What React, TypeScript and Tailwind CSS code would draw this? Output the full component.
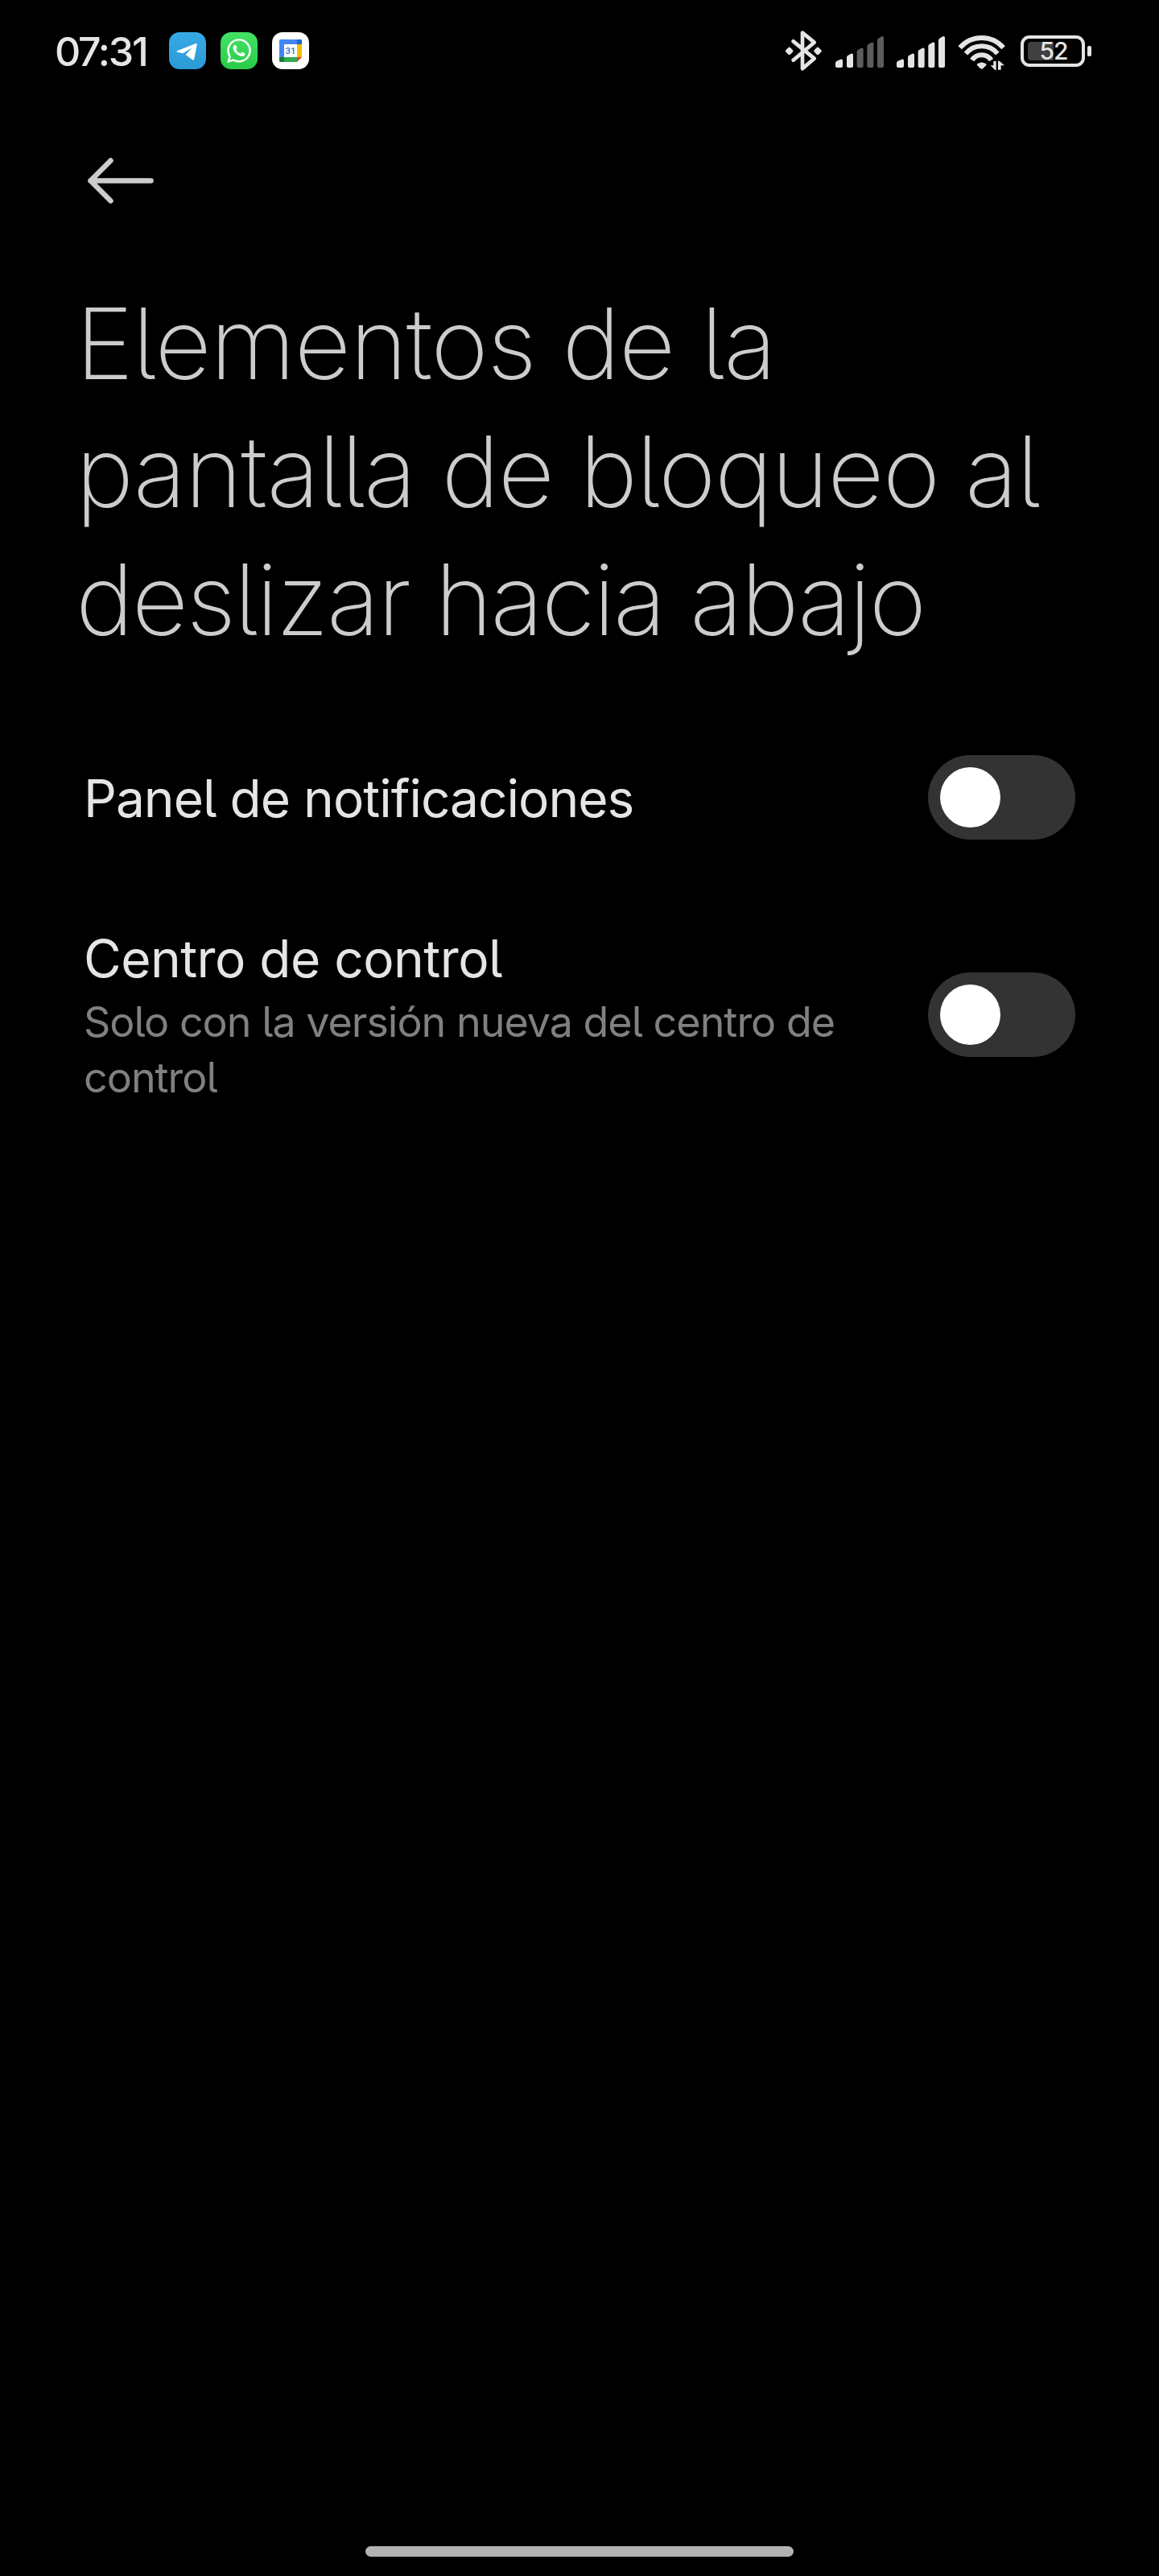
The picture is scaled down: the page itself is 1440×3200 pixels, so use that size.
import { useState } from "react";
import { FaWhatsapp } from "react-icons/fa";

type ToggleProps = {
  label: string;
  checked: boolean;
  onChange: (checked: boolean) => void;
};

function Toggle({ label, checked, onChange }: ToggleProps) {
  return (
    <button
      type="button"
      role="switch"
      aria-checked={checked}
      aria-label={label}
      onClick={() => onChange(!checked)}
      className={`flex h-[105px] w-[183px] shrink-0 items-center rounded-full bg-[#333333] px-[15px] ${
        checked ? "justify-end" : "justify-start"
      }`}
    >
      <span className="size-[75px] rounded-full bg-white" />
    </button>
  );
}

function TelegramIcon() {
  return (
    <span className="flex size-[46px] items-center justify-center rounded-[13px] bg-linear-to-b from-[#37aae6] to-[#2b9ad6]">
      <svg viewBox="480 60 138 138" className="size-full" fill="#ffffff">
        <path d="M510 130 L580 102 Q585 101 584 107 L574 160 Q572 166 566 162 L542 144 L566 118 L532 139 L511 134 Q506 132 510 130 Z" />
      </svg>
    </span>
  );
}

function WhatsappIcon() {
  return (
    <span className="flex size-[46px] items-center justify-center rounded-[13px] bg-linear-to-b from-[#43e463] to-[#2bc948]">
      <FaWhatsapp className="size-[34px] text-white" />
    </span>
  );
}

function CalendarIcon() {
  return (
    <span className="size-[46px] rounded-[13px] bg-white">
      <svg viewBox="864 60 138 138" className="size-full">
        <path d="M895 87 H957 V105 H909 V153 H891 V91 Q891 87 895 87 Z" fill="#4285f4" />
        <path d="M957 87 H971 Q975 87 975 91 V105 H957 Z" fill="#1967d2" />
        <path d="M957 105 H975 V153 H957 Z" fill="#fbbc04" />
        <path d="M909 153 H957 V171 H909 Z" fill="#34a853" />
        <path d="M891 153 H909 V171 H895 Q891 171 891 167 Z" fill="#188038" />
        <path d="M957 153 H975 L957 171 Z" fill="#ea4335" />
        <text x="933" y="141" textAnchor="middle" fontSize="34" fontWeight="500" fill="#2f6fdc" className="font-['Roboto',sans-serif]">
          31
        </text>
      </svg>
    </span>
  );
}

function BluetoothIcon() {
  return (
    <svg viewBox="48 55 135 150" className="h-[50px] w-[45px]" fill="none" stroke="#e5e5e5" strokeLinejoin="round" strokeLinecap="round">
      <path d="M77 165 L155 99 L111 63 V197 L155 159 L77 95" strokeWidth="14" />
      <path d="M62 123 L70 131 L62 139 L54 131 Z" fill="#e5e5e5" strokeWidth="12" />
      <path d="M168 123 L176 131 L168 139 L160 131 Z" fill="#e5e5e5" strokeWidth="12" />
    </svg>
  );
}

const BARS = [
  { x: 0, w: 27, top: 85 },
  { x: 42, w: 24, top: 64 },
  { x: 80, w: 24, top: 43 },
  { x: 118, w: 24, top: 22 },
  { x: 156, w: 24, top: 0 },
];

function SignalIcon({ level }: { level: number }) {
  return (
    <svg viewBox="0 0 180 117" className="h-[39px] w-[60px]">
      {BARS.map(({ x, w, top }, i) => (
        <path
          key={x}
          d={`M${x} ${top + 15} Q${x} ${top + 11} ${x + 4} ${top + 8} L${x + w - 8} ${top + 1} Q${x + w} ${top - 2} ${x + w} ${top + 6} V111 Q${x + w} 117 ${x + w - 6} 117 H${x + 6} Q${x} 117 ${x} 111 Z`}
          fill={i < level ? "#e5e5e5" : "#5c5c5c"}
        />
      ))}
    </svg>
  );
}

function WifiIcon() {
  return (
    <svg viewBox="61 66 177 132" className="h-[44px] w-[59px]" fill="none" stroke="#e5e5e5" strokeWidth="18">
      <path d="M69 115 A107 107 0 0 1 231 115" />
      <path d="M91 137 A76 76 0 0 1 209 137" />
      <path d="M114 161 A43 43 0 0 1 186 161" />
      <path d="M133 180 Q131 176 135 174 Q150 165 165 174 Q169 176 167 180 L155 192 Q150 196 145 192 Z" fill="#e5e5e5" stroke="none" />
      {/* data up/down arrows */}
      <path d="M194 165 H204 V198 H200 L183 181 H194 Z" fill="#e5e5e5" stroke="none" />
      <path d="M211 164 H216 L235 181 H222 V197 H211 Z" fill="#e5e5e5" stroke="none" />
    </svg>
  );
}

function BatteryIcon({ percent }: { percent: number }) {
  return (
    <div className="flex items-center gap-[3px]">
      <div className="relative flex h-[39px] w-[80px] items-center rounded-[11px] border-4 border-[#e5e5e5] px-[5px]">
        <div className="h-[23px] rounded-l-[4px] bg-[#404040]" style={{ width: `${percent}%` }} />
        <span className="absolute inset-0 flex items-center justify-center pl-[2px] text-[30px] leading-none font-medium tracking-[-1px] text-[#e5e5e5]">
          {percent}
        </span>
      </div>
      <div className="h-[13px] w-[5px] rounded-[2px] bg-[#e5e5e5]" />
    </div>
  );
}

function StatusBar() {
  return (
    <div className="flex h-[126px] items-center justify-between pr-[84px] pl-[68px]">
      <div className="flex items-center">
        <span className="w-[142px] pt-px text-[50px] leading-none font-medium tracking-[-2.2px] text-[#e5e5e5]">07:31</span>
        <div className="flex gap-[18px]">
          <TelegramIcon />
          <WhatsappIcon />
          <CalendarIcon />
        </div>
      </div>
      <div className="flex items-center">
        <BluetoothIcon />
        <div className="ml-[17px] flex gap-4 pt-[3px]">
          <SignalIcon level={2} />
          <SignalIcon level={5} />
        </div>
        <div className="mr-[19px] ml-4 pt-[3px]">
          <WifiIcon />
        </div>
        <BatteryIcon percent={52} />
      </div>
    </div>
  );
}

export default function App() {
  const [notifications, setNotifications] = useState(false);
  const [controlCenter, setControlCenter] = useState(false);

  return (
    <div className="flex h-[3200px] w-[1440px] flex-col bg-black font-['Inter','Noto_Sans',sans-serif] [font-feature-settings:'cv05']">
      <StatusBar />

      <header className="px-[94px] pt-[70px]">
        <button type="button" aria-label="Atrás" className="block pl-[15px]">
          <svg viewBox="0 0 82 58" className="h-[58px] w-[82px]" fill="none" stroke="#cccccc" strokeWidth="6.5" strokeLinecap="round" strokeLinejoin="round">
            <path d="M28.5 3.5 L3.5 28.5 L28.5 53.5 M3.5 28.5 H78.5" />
          </svg>
        </button>
        <h1 className="mt-[93px] text-[122px] leading-[159px] font-extralight whitespace-nowrap text-[#cccccc]">
          <span className="block tracking-[-1.45px]">Elementos de la</span>
          <span className="block tracking-[-1.7px]">pantalla de bloqueo al</span>
          <span className="block tracking-[-2.4px]">deslizar hacia abajo</span>
        </h1>
      </header>

      <main className="mt-[86px] px-[104px]">
        <div className="flex h-[161px] items-center justify-between">
          <span className="pt-[2px] text-[64px] leading-[84px] tracking-[-1px] text-[#e5e5e5]">Panel de notificaciones</span>
          <Toggle label="Panel de notificaciones" checked={notifications} onChange={setNotifications} />
        </div>
        <div className="mt-[77px] flex h-[225px] items-center justify-between">
          <div className="w-[960px] pt-px">
            <p className="text-[64px] leading-[84px] tracking-[-0.55px] text-[#e5e5e5]">Centro de control</p>
            <p className="mt-[2px] text-[52px] leading-[69px] tracking-[-1px] text-[#808080]">
              Solo con la versión nueva del centro de control
            </p>
          </div>
          <Toggle label="Centro de control" checked={controlCenter} onChange={setControlCenter} />
        </div>
      </main>

      <footer className="mt-auto flex justify-center pb-6">
        <div className="h-[13px] w-[532px] rounded-full bg-[#b3b3b3]" />
      </footer>
    </div>
  );
}
